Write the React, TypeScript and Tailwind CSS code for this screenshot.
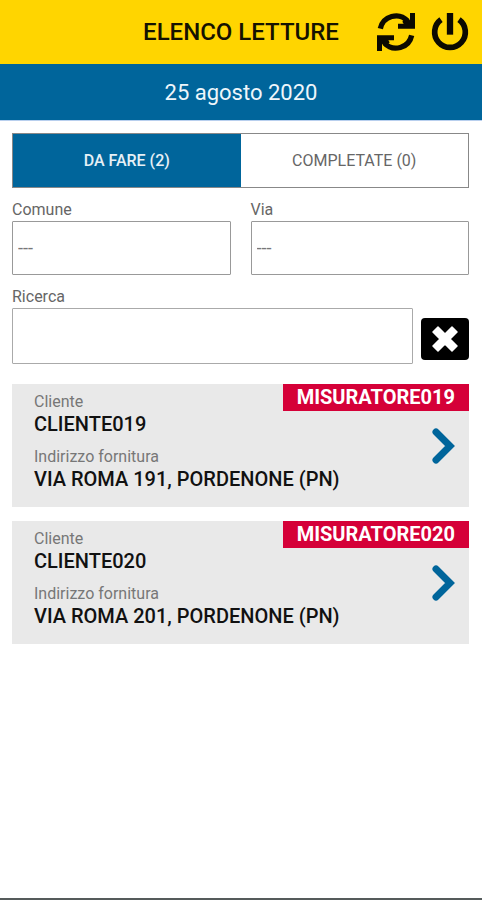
type Reading = {
  meter: string;
  customer: string;
  address: string;
};

const readings: Reading[] = [
  {
    meter: "MISURATORE019",
    customer: "CLIENTE019",
    address: "VIA ROMA 191, PORDENONE (PN)",
  },
  {
    meter: "MISURATORE020",
    customer: "CLIENTE020",
    address: "VIA ROMA 201, PORDENONE (PN)",
  },
];

function RefreshIcon() {
  return (
    <svg viewBox="0 0 114 114" className="size-[38px]" fill="none" aria-hidden="true">
      <path d="M10 47A48 48 0 0 1 92 24" stroke="#0c0a00" strokeWidth="16" />
      <path d="M99 0H114V47H63V32H80L76 26L88 12L99 22Z" fill="#0c0a00" />
      <path d="M104 67A48 48 0 0 1 22 90" stroke="#0c0a00" strokeWidth="16" />
      <path d="M15 114H0V67H51V82H34L38 88L26 102L15 92Z" fill="#0c0a00" />
    </svg>
  );
}

function PowerIcon() {
  return (
    <svg viewBox="0 0 114 114" className="size-[38px]" fill="none" stroke="#0c0a00" aria-hidden="true">
      <path d="M30 20A46 46 0 1 0 84 20" strokeWidth="17" />
      <path d="M57 0V65" strokeWidth="19" />
    </svg>
  );
}

function ClearIcon() {
  return (
    <svg viewBox="0 0 26 26" className="size-[26px]" fill="none" aria-hidden="true">
      <path
        d="M6 1L13 8L20 1L25 6L18 13L25 20L20 25L13 18L6 25L1 20L8 13L1 6Z"
        fill="#fff"
        stroke="#fff"
        strokeWidth="1.5"
        strokeLinejoin="round"
      />
    </svg>
  );
}

function ChevronIcon() {
  return (
    <svg viewBox="0 0 24 38" className="h-[38px] w-6" fill="none" aria-hidden="true">
      <path d="M5 5L19 19L5 33" stroke="#00659b" strokeWidth="7" strokeLinecap="round" />
    </svg>
  );
}

type SelectFieldProps = {
  id: string;
  label: string;
};

function SelectField({ id, label }: SelectFieldProps) {
  return (
    <div className="flex min-w-0 flex-1 flex-col">
      <label htmlFor={id} className="text-base leading-[23px] text-[#666]">
        {label}
      </label>
      <select
        id={id}
        className="h-[54px] w-full appearance-none rounded-[1px] border border-[#999] bg-white px-[5px] text-lg text-[#777]"
      >
        <option>---</option>
      </select>
    </div>
  );
}

function ReadingCard({ meter, customer, address }: Reading) {
  return (
    <li className="relative flex items-center bg-[#e9e9e9] pr-[14px] pl-[22px]">
      <dl className="min-w-0 flex-1 pt-2 pb-4">
        <dt className="text-base leading-5 text-[#777]">Cliente</dt>
        <dd className="text-xl leading-6 font-medium text-[#111]">{customer}</dd>
        <dt className="mt-[11px] text-base leading-5 text-[#777]">Indirizzo fornitura</dt>
        <dd className="text-xl leading-6 font-medium text-[#111]">{address}</dd>
      </dl>
      <span className="absolute top-0 right-0 bg-[#d50038] px-[14px] text-xl leading-[27px] font-bold text-white">
        {meter}
      </span>
      <button type="button" aria-label={`Apri ${meter}`}>
        <ChevronIcon />
      </button>
    </li>
  );
}

export default function App() {
  return (
    <div className="flex min-h-screen flex-col border-b-2 border-[#555b5b] bg-white font-[Roboto,sans-serif]">
      <header>
        <div className="grid h-16 grid-cols-[1fr_auto_1fr] items-center bg-[#ffd500] px-[13px]">
          <h1 className="col-start-2 text-2xl leading-8 font-medium text-[#151200]">
            ELENCO LETTURE
          </h1>
          <div className="flex items-center justify-end gap-4">
            <button type="button" aria-label="Aggiorna">
              <RefreshIcon />
            </button>
            <button type="button" aria-label="Esci">
              <PowerIcon />
            </button>
          </div>
        </div>
        <p className="h-[57px] border-b border-[#b8cfee] bg-[#00659b] text-center text-[22px] leading-[57px] text-[#eef6fb]">
          25 agosto 2020
        </p>
      </header>

      <main className="flex-1 pt-3 pr-[13px] pl-3">
        <div role="tablist" className="flex h-[55px] border border-[#888]">
          <button
            type="button"
            role="tab"
            aria-selected="true"
            className="flex-1 bg-[#00659b] text-base font-medium text-[#e6f0f6]"
          >
            DA FARE (2)
          </button>
          <button
            type="button"
            role="tab"
            aria-selected="false"
            className="flex-1 bg-white text-base text-[#666]"
          >
            COMPLETATE (0)
          </button>
        </div>

        <div className="mt-[10px] flex gap-5">
          <SelectField id="comune" label="Comune" />
          <SelectField id="via" label="Via" />
        </div>

        <div className="mt-[10px]">
          <label htmlFor="ricerca" className="block text-base leading-[23px] text-[#666]">
            Ricerca
          </label>
          <div className="flex items-end gap-2">
            <input
              id="ricerca"
              type="text"
              className="h-14 min-w-0 flex-1 rounded-[1px] border border-[#aaa] bg-white px-[5px] text-lg text-[#666]"
            />
            <button
              type="button"
              aria-label="Cancella ricerca"
              className="mb-1 flex h-[42px] w-12 items-center justify-center rounded bg-black"
            >
              <ClearIcon />
            </button>
          </div>
        </div>

        <ul className="mt-5 flex flex-col gap-[14px]">
          {readings.map((reading) => (
            <ReadingCard key={reading.meter} {...reading} />
          ))}
        </ul>
      </main>
    </div>
  );
}
